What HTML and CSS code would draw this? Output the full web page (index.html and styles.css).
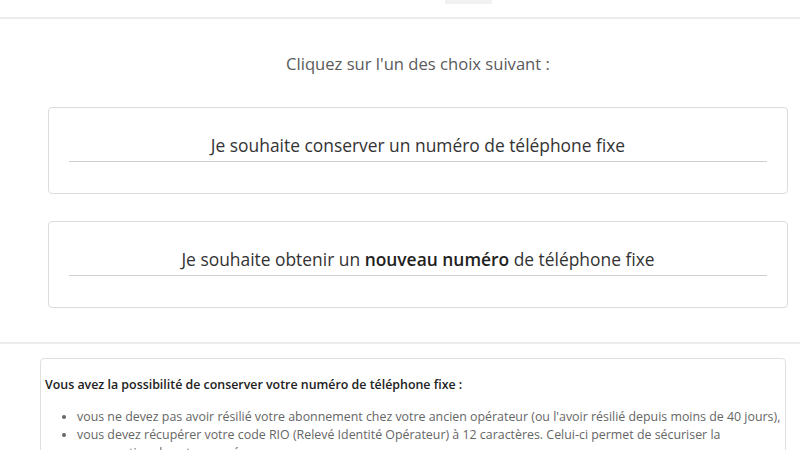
FILE: index.html
```html
<!DOCTYPE html>
<html lang="fr">
<head>
<meta charset="utf-8">
<link rel="stylesheet" href="styles.css">
</head>
<body>
<header class="top">
  <div class="logo-tail"></div>
</header>
<main class="choices">
  <p class="intro">Cliquez sur l'un des choix suivant :</p>
  <div class="card">
    <div class="card-title">Je souhaite conserver un numéro de téléphone fixe</div>
  </div>
  <div class="card">
    <div class="card-title">Je souhaite obtenir un <strong>nouveau numéro</strong> de téléphone fixe</div>
  </div>
</main>
<section class="info-wrap">
  <div class="info">
    <p class="info-head">Vous avez la possibilité de conserver votre numéro de téléphone fixe :</p>
    <ul class="info-list">
      <li>vous ne devez pas avoir résilié votre abonnement chez votre ancien opérateur (ou l'avoir résilié depuis moins de 40 jours),</li>
      <li>vous devez récupérer votre code RIO (Relevé Identité Opérateur) à 12 caractères. Celui-ci permet de sécuriser la conservation de votre numéro.</li>
    </ul>
  </div>
</section>
</body>
</html>
```
FILE: styles.css
```css
html, body {
  margin: 0;
  padding: 0;
  background: #fff;
  font-family: "Open Sans", "Liberation Sans", sans-serif;
  overflow: hidden;
}
.top {
  height: 17px;
  border-bottom: 2px solid #ececec;
}
.logo-tail {
  margin-left: 445px;
  width: 47px;
  height: 4px;
  background: #f1f1f1;
}
.choices {
  padding: 34px 12px 34px 48px;
  border-bottom: 2px solid #ececec;
}
.intro {
  margin: 0 0 32px;
  text-align: center;
  font-size: 16.6px;
  line-height: 22px;
  color: #5a5a5a;
}
.card {
  border: 1px solid #dcdcdc;
  border-radius: 4px;
  padding: 25px 20px 31px;
  margin-bottom: 27px;
}
.card:last-child {
  margin-bottom: 0;
}
.card-title {
  text-align: center;
  font-size: 17.4px;
  line-height: 24px;
  color: #333;
  padding-bottom: 4px;
  border-bottom: 1px solid #cfcfcf;
}
.card-title strong {
  font-weight: 600;
  color: #222;
}
.info-wrap {
  padding: 14px 14px 0 40px;
}
.info {
  border: 1px solid #e0e0e0;
  border-radius: 4px;
  padding: 17px 4px 10px;
}
.info-head {
  margin: 0 0 14px;
  font-size: 12.4px;
  line-height: 18px;
  font-weight: 600;
  color: #222;
}
.info-list {
  margin: 0;
  padding-left: 32px;
  font-size: 12.4px;
  line-height: 18px;
  color: #666;
}
```
